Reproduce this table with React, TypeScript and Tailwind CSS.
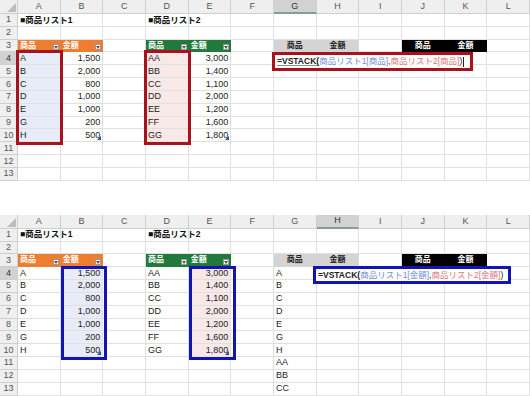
import React from "react";

const COLS = ["A", "B", "C", "D", "E", "F", "G", "H", "I", "J", "K", "L"];

const list1: [string, string][] = [
  ["A", "1,500"],
  ["B", "2,000"],
  ["C", "800"],
  ["D", "1,000"],
  ["E", "1,000"],
  ["G", "200"],
  ["H", "500"],
];

const list2: [string, string][] = [
  ["AA", "3,000"],
  ["BB", "1,400"],
  ["CC", "1,100"],
  ["DD", "2,000"],
  ["EE", "1,200"],
  ["FF", "1,600"],
  ["GG", "1,800"],
];

const spill = ["A", "B", "C", "D", "E", "G", "H", "AA", "BB", "CC"];

type Variant = "top" | "bottom";

function Dropdown() {
  return (
    <span className="absolute right-[1px] bottom-[1px] w-[6px] h-[6px] bg-white border border-[#9a9a9a] flex items-center justify-center">
      <svg width="4" height="3" viewBox="0 0 4 3">
        <path d="M0 0h4L2 3z" fill="#555" />
      </svg>
    </span>
  );
}

function ResizeMark() {
  return (
    <svg className="absolute right-[1px] bottom-[1px]" width="4" height="4" viewBox="0 0 4 4">
      <path d="M4 0v4H0z" fill="#1f4e9a" />
    </svg>
  );
}

function cell(v: Variant, col: number, row: number) {
  const name = COLS[col];
  const base = "relative flex items-center px-[2px] whitespace-nowrap border-r border-b";
  const grid = "border-[#e0e0e0]";

  // table headers in row 3
  if (row === 3) {
    if (name === "A" || name === "B") {
      return (
        <div className={`${base} border-[#ed7d31] bg-[#ed7d31] text-white font-bold text-[8px]`}>
          {name === "A" ? "商品" : "金額"}
          <Dropdown />
        </div>
      );
    }
    if (name === "D" || name === "E") {
      return (
        <div className={`${base} border-[#217a3c] bg-[#217a3c] text-white font-bold text-[8px]`}>
          {name === "D" ? "商品" : "金額"}
          <Dropdown />
        </div>
      );
    }
    if (name === "G" || name === "H") {
      return (
        <div className={`${base} justify-center border-[#d4d4d4] bg-[#d4d4d4] text-[#222] font-bold text-[8px]`}>
          {name === "G" ? "商品" : "金額"}
        </div>
      );
    }
    if (name === "J" || name === "K") {
      return (
        <div className={`${base} justify-center border-black bg-black text-white font-bold text-[8px]`}>
          {name === "J" ? "商品" : "金額"}
        </div>
      );
    }
  }

  if (row === 1 && (name === "A" || name === "D")) {
    return (
      <div className={`${base} ${grid} font-bold text-[8.5px] text-[#111] overflow-visible z-10`}>
        {name === "A" ? "■商品リスト1" : "■商品リスト2"}
      </div>
    );
  }

  if (row >= 4 && row <= 10) {
    const i = row - 4;
    const blueCol = v === "top" ? "A" : "B";
    const pinkCol = v === "top" ? "D" : "E";
    const bg = name === blueCol ? "bg-[#e7ecf8]" : name === pinkCol ? "bg-[#f8e8e8]" : "";
    if (name === "A") return <div className={`${base} ${grid} ${bg} text-[9px] text-[#222]`}>{list1[i][0]}</div>;
    if (name === "B")
      return (
        <div className={`${base} ${grid} ${bg} justify-end text-[9px] text-[#222]`}>
          {list1[i][1]}
          {row === 10 && <ResizeMark />}
        </div>
      );
    if (name === "D") return <div className={`${base} ${grid} ${bg} text-[9px] text-[#222]`}>{list2[i][0]}</div>;
    if (name === "E")
      return (
        <div className={`${base} ${grid} ${bg} justify-end text-[9px] text-[#222]`}>
          {list2[i][1]}
          {row === 10 && <ResizeMark />}
        </div>
      );
  }

  if (v === "bottom" && name === "G" && row >= 4) {
    return <div className={`${base} ${grid} text-[9px] text-[#222]`}>{spill[row - 4]}</div>;
  }

  return <div className={`${base} ${grid}`} />;
}

function Sheet({ v }: { v: Variant }) {
  const selCol = v === "top" ? 6 : 7;
  const rows = Array.from({ length: 13 }, (_, i) => i + 1);
  const boxColor = v === "top" ? "border-[#a8121c]" : "border-[#1414b4]";

  return (
    <div className="relative w-[530px] grid grid-cols-[18px_repeat(12,minmax(0,1fr))] grid-rows-[14px_repeat(13,12.83px)] bg-white">
      {/* corner */}
      <div className="relative bg-[#efefef] border-r border-b border-[#cfcfcf]">
        <svg className="absolute right-[1px] bottom-[1px]" width="9" height="9" viewBox="0 0 9 9">
          <path d="M9 0v9H0z" fill="#bdbdbd" />
        </svg>
      </div>
      {COLS.map((c, i) => (
        <div
          key={c}
          className={`flex items-center justify-center text-[9px] border-r ${
            i === selCol
              ? "bg-[#d2d2d2] text-[#333] border-b-2 border-b-[#8a9b8f] border-r-[#cfcfcf]"
              : "bg-[#efefef] text-[#555] border-b border-[#cfcfcf]"
          }`}
        >
          {c}
        </div>
      ))}
      {rows.map((r) => (
        <React.Fragment key={r}>
          <div
            className={`flex items-center justify-center text-[9px] border-r border-b border-[#cfcfcf] ${
              r === 4 ? "bg-[#d2d2d2] text-[#333]" : "bg-[#efefef] text-[#555]"
            }`}
          >
            {r}
          </div>
          {COLS.map((_, ci) => (
            <React.Fragment key={ci}>{cell(v, ci, r)}</React.Fragment>
          ))}
        </React.Fragment>
      ))}

      {/* referenced ranges */}
      {v === "top" ? (
        <>
          <div className={`absolute left-[16px] top-[50px] w-[47px] h-[95px] border-[3px] ${boxColor} pointer-events-none`} />
          <div className={`absolute left-[144px] top-[50px] w-[47px] h-[95px] border-[3px] ${boxColor} pointer-events-none`} />
          <div className={`absolute left-[272px] top-[52px] w-[201px] h-[19px] border-[3px] ${boxColor} bg-white flex items-center pl-[2px] whitespace-nowrap text-[8.5px] font-['Liberation_Sans','Noto_Sans_CJK_JP',sans-serif]`}>
            <span className="font-bold text-[#222] border-b border-[#8a8a8a]">=VSTACK(</span>
            <span className="text-[#6f8fd8]">商品リスト1[商品]</span>
            <span className="text-[#222]">,</span>
            <span className="text-[#d77a7a]">商品リスト2[商品]</span>
            <span className="text-[#222]">)</span>
            <span className="ml-[1px] w-px h-[10px] bg-[#222]" />
          </div>
        </>
      ) : (
        <>
          <div className={`absolute left-[61px] top-[51px] w-[46px] h-[94px] border-[3px] ${boxColor} pointer-events-none`} />
          <div className={`absolute left-[189px] top-[51px] w-[47px] h-[94px] border-[3px] ${boxColor} pointer-events-none`} />
          <div className={`absolute left-[313px] top-[51px] w-[198px] h-[18px] border-[3px] ${boxColor} bg-white flex items-center pl-[2px] whitespace-nowrap text-[8.5px] font-['Liberation_Sans','Noto_Sans_CJK_JP',sans-serif]`}>
            <span className="font-bold text-[#222]">=VSTACK(</span>
            <span className="text-[#6f8fd8]">商品リスト1[金額]</span>
            <span className="text-[#222]">,</span>
            <span className="text-[#d77a7a]">商品リスト2[金額]</span>
            <span className="text-[#222]">)</span>
          </div>
        </>
      )}
    </div>
  );
}

export default function App() {
  return (
    <div className="w-[530px] h-[396px] overflow-hidden bg-white flex flex-col font-['Liberation_Sans','Noto_Sans_CJK_JP',sans-serif] leading-none">
      <Sheet v="top" />
      <div className="h-[34px] shrink-0" />
      <Sheet v="bottom" />
    </div>
  );
}
